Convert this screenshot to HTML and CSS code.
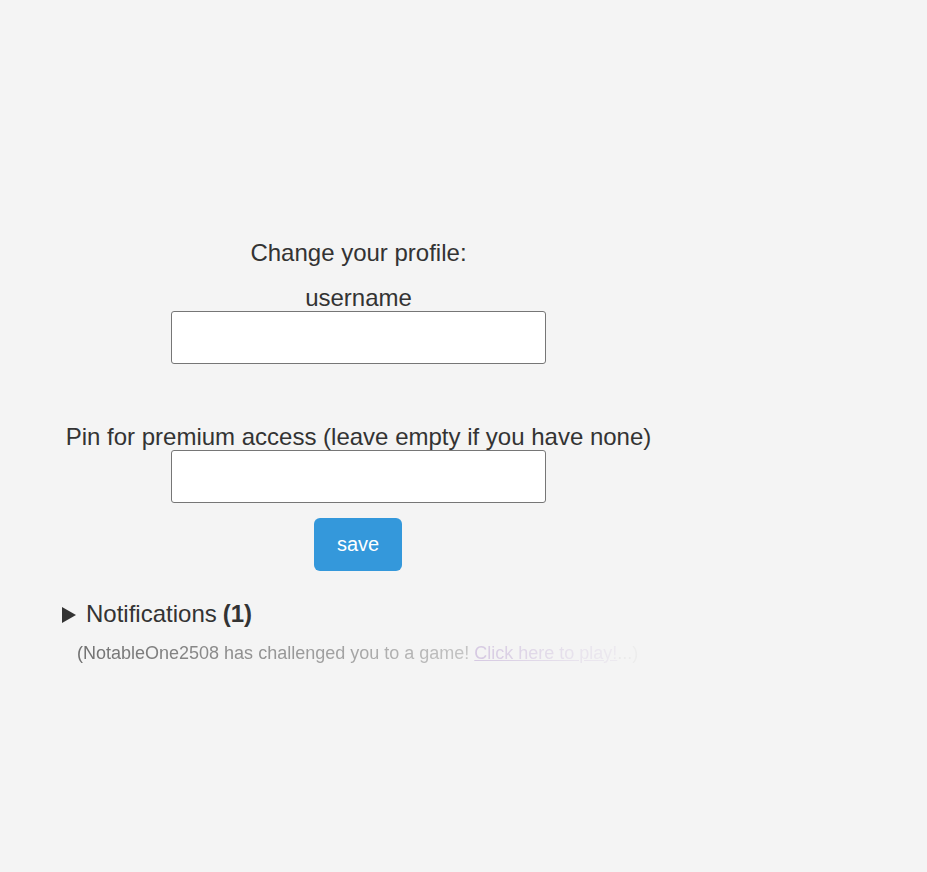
FILE: index.html
```html
<!DOCTYPE html>
<html>
<head>
<meta charset="utf-8">
<link rel="stylesheet" href="styles.css">
</head>
<body>
<div class="profile">
  <div class="title">Change your profile:</div>
  <div class="label label-user">username</div>
  <input class="field" type="text">
  <div class="label label-pin">Pin for premium access (leave empty if you have none)</div>
  <input class="field" type="text">
  <button class="save">save</button>
  <details class="notes">
    <summary>Notifications <b>(1)</b></summary>
  </details>
  <div class="note">(NotableOne2508 has challenged you to a game! <a href="#" class="link">Click here to play!</a>...)</div>
</div>
</body>
</html>
```
FILE: styles.css
```css
html, body {
  margin: 0;
  padding: 0;
  background: #f4f4f4;
}
body {
  font-family: "Liberation Sans", Arial, sans-serif;
  color: #333;
}
.profile {
  width: 601px;
  margin-left: 58px;
  padding-top: 238px;
  text-align: center;
}
.title {
  font-size: 24px;
  line-height: 30px;
}
.label {
  font-size: 24px;
  line-height: 27px;
}
.label-user {
  margin-top: 16px;
}
.label-pin {
  margin-top: 59px;
}
.field {
  display: block;
  box-sizing: border-box;
  width: 375px;
  height: 53px;
  margin: 0 auto;
  background: #fff;
  border: 1px solid #767676;
  border-radius: 3px;
}
.save {
  display: block;
  margin: 15px 0 0 256px;
  width: 88px;
  height: 53px;
  background: #3498db;
  color: #fff;
  border: none;
  border-radius: 6px;
  font-family: "Liberation Sans", Arial, sans-serif;
  font-size: 20px;
}
.notes {
  text-align: left;
  margin-top: 29px;
  padding-left: 4px;
  font-size: 24px;
  line-height: 27px;
}
.notes summary {
  cursor: pointer;
  list-style: none;
  display: flex;
  align-items: center;
}
.notes summary::-webkit-details-marker {
  display: none;
}
.notes summary::before {
  content: "";
  width: 0;
  height: 0;
  border-left: 14px solid #333;
  border-top: 8px solid transparent;
  border-bottom: 8px solid transparent;
  margin-right: 10px;
  margin-top: 3px;
}
.notes summary b {
  margin-left: 6px;
}
.note {
  text-align: left;
  margin-top: 16px;
  padding-left: 19px;
  font-size: 18px;
  line-height: 20px;
  color: #555;
  -webkit-mask-image: linear-gradient(to right, rgba(0,0,0,0.85) 0%, rgba(0,0,0,0.5) 50%, rgba(0,0,0,0.12) 88%, rgba(0,0,0,0.04) 100%);
  mask-image: linear-gradient(to right, rgba(0,0,0,0.85) 0%, rgba(0,0,0,0.5) 50%, rgba(0,0,0,0.12) 88%, rgba(0,0,0,0.04) 100%);
  width: 562px;
  white-space: nowrap;
}
.link {
  color: #8a5db5;
}
```
